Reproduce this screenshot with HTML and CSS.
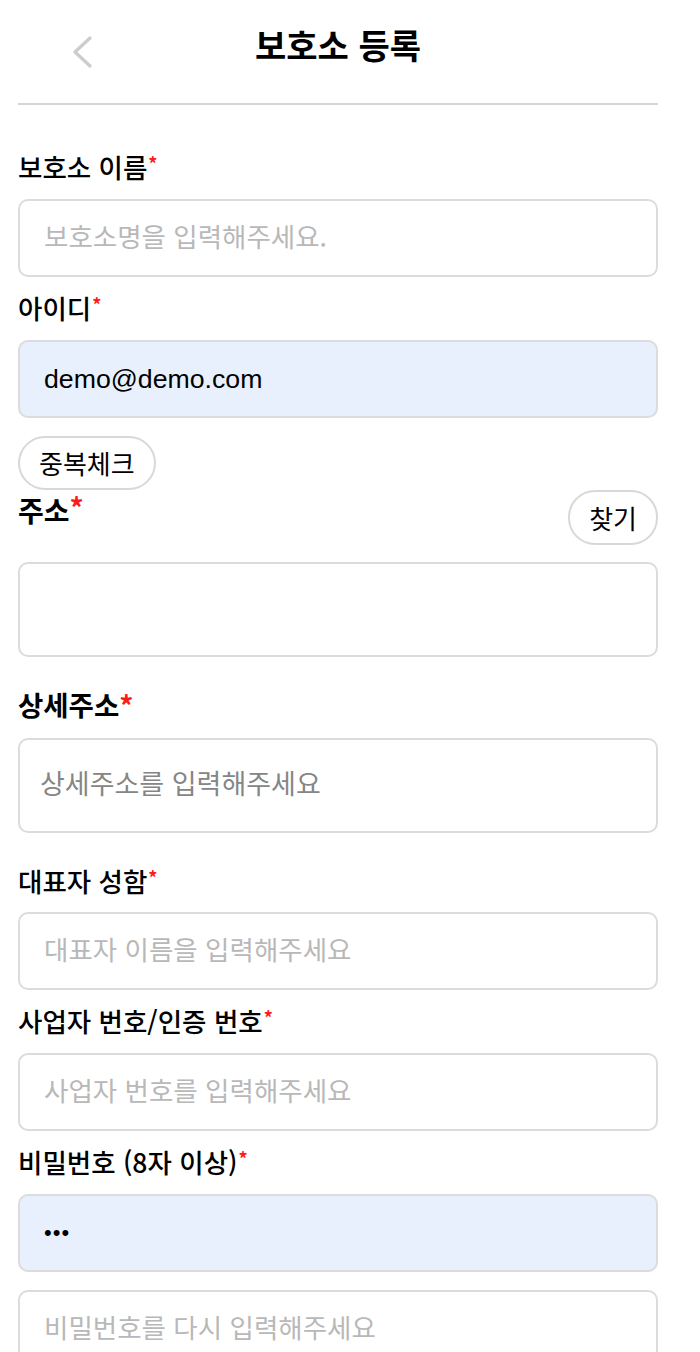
FILE: index.html
```html
<!DOCTYPE html>
<html lang="ko">
<head>
<meta charset="utf-8">
<title>보호소 등록</title>
<link rel="stylesheet" href="styles.css">
</head>
<body>
<div class="page">
  <header class="topbar">
    <div class="back">
      <svg width="22" height="34" viewBox="0 0 22 34" aria-hidden="true">
        <path d="M18 3 L3 17 L18 31" fill="none" stroke="#cccccc" stroke-width="3.2" stroke-linecap="round" stroke-linejoin="round"/>
      </svg>
    </div>
    <h1 class="title">보호소 등록</h1>
    <div></div>
  </header>

  <form class="form">
    <label class="label l-first">보호소 이름<span class="req">*</span></label>
    <input class="field" type="text" placeholder="보호소명을 입력해주세요.">

    <label class="label">아이디<span class="req">*</span></label>
    <input class="field filled" type="text" value="demo@demo.com">

    <div class="dup-row"><button type="button" class="pill">중복체크</button></div>

    <div class="addr-row">
      <span class="label-bold">주소<span class="req-big">*</span></span>
      <button type="button" class="pill">찾기</button>
    </div>
    <input class="field tall" type="text">

    <label class="label-bold l-detail">상세주소<span class="req-big">*</span></label>
    <input class="field tall dark" type="text" placeholder="상세주소를 입력해주세요">

    <label class="label l-after-tall">대표자 성함<span class="req">*</span></label>
    <input class="field" type="text" placeholder="대표자 이름을 입력해주세요">

    <label class="label">사업자 번호/인증 번호<span class="req">*</span></label>
    <input class="field" type="text" placeholder="사업자 번호를 입력해주세요">

    <label class="label">비밀번호 (8자 이상)<span class="req">*</span></label>
    <input class="field filled pw" type="password" value="abc">

    <input class="field" type="password" placeholder="비밀번호를 다시 입력해주세요">
  </form>
</div>
</body>
</html>
```

FILE: styles.css
```css
* { box-sizing: border-box; }

html, body {
  margin: 0;
  padding: 0;
  background: #ffffff;
}

body {
  font-family: "Noto Sans CJK KR", "Noto Sans", sans-serif;
  color: #000;
  overflow: hidden;
}

.page {
  width: 640px;
  margin-left: 18px;
}

.topbar {
  height: 105px;
  display: grid;
  grid-template-columns: 1fr auto 1fr;
  align-items: start;
  border-bottom: 2px solid #d4d4d4;
}

.back {
  padding-left: 54px;
  padding-top: 35px;
  display: flex;
}

.title {
  margin: 0;
  padding-top: 22px;
  font-size: 34px;
  line-height: 46px;
  font-weight: 700;
  letter-spacing: 0;
}

.form {
  display: flex;
  flex-direction: column;
}

.label {
  display: block;
  font-size: 26.5px;
  line-height: 32px;
  font-weight: 500;
  margin: 15px 0 16px;
}

.l-first { margin-top: 46px; }
.l-after-tall { margin-top: 32px; margin-bottom: 15px; }

.req {
  color: #ff1a1a;
  font-size: 18px;
  font-weight: 700;
  vertical-align: top;
  line-height: 24px;
  margin-left: 1px;
}

.label-bold {
  font-size: 27.5px;
  line-height: 40px;
  font-weight: 700;
}

.addr-row .label-bold {
  font-size: 28px;
}

.req-big {
  color: #ff1a1a;
  font-size: 28px;
  font-weight: 700;
  vertical-align: top;
  line-height: 34px;
}

.l-detail {
  display: block;
  line-height: 32px;
  margin: 31px 0 16px;
}

.field {
  display: block;
  width: 100%;
  height: 78px;
  border: 2px solid #dcdcdc;
  border-radius: 10px;
  padding: 0 24px;
  background: #fff;
  font-family: "Liberation Sans", "Noto Sans CJK KR", sans-serif;
  font-size: 26.7px;
  color: #000;
  outline: none;
}

.field::placeholder {
  font-family: "Noto Sans CJK KR", sans-serif;
  font-size: 26.5px;
  color: #b8b8b8;
}

.field.filled {
  background: #e8f0fe;
}

.field.pw {
  font-size: 22px;
  letter-spacing: 1px;
}

.field.tall {
  height: 95px;
  padding: 0 20px;
}

.field.dark::placeholder {
  color: #858585;
  font-size: 27px;
}

.dup-row {
  display: flex;
  margin-top: 18px;
}

.pill {
  height: 54px;
  padding: 0 19px;
  border: 2px solid #d8d8d8;
  border-radius: 27px;
  background: #fff;
  font-family: "Noto Sans CJK KR", sans-serif;
  font-size: 26px;
  color: #000;
  line-height: 1;
}

.addr-row {
  display: flex;
  justify-content: space-between;
  align-items: flex-start;
  margin-bottom: 17px;
}

.addr-row .pill {
  height: 55px;
}

.form > .field + .field { margin-top: 18px; }
```
